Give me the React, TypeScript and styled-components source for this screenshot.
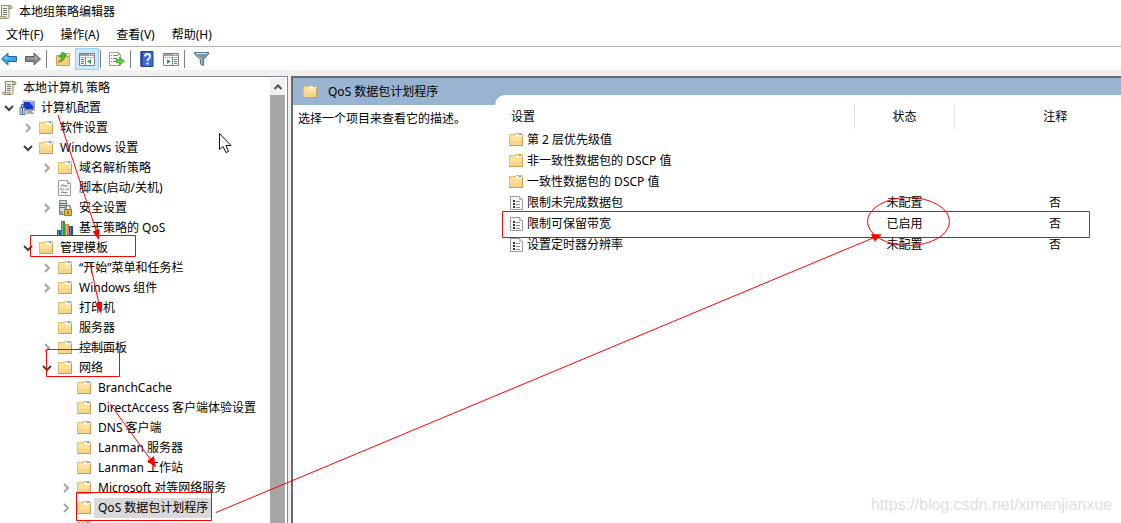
import React from "react";
import styled, { createGlobalStyle } from "styled-components";

const GlobalStyle = createGlobalStyle`
  * { box-sizing: border-box; }
  body {
    margin: 0;
    background: #fff;
    color: #000;
    font-family: "Noto Sans", "Noto Sans CJK SC", sans-serif;
    font-size: 12px;
    line-height: 20px;
  }
  button { font: inherit; color: inherit; }
`;

const Window = styled.div`
  position: relative;
  display: flex;
  flex-direction: column;
  height: 100vh;
  overflow: hidden;
  background: #fff;
`;

const TitleBar = styled.header`
  display: flex;
  align-items: center;
  gap: 6px;
  height: 24px;
  flex: none;
  margin-left: -3px;
`;

const Title = styled.h1`
  margin: 0;
  font-size: 12px;
  font-weight: 400;
`;

const MenuBar = styled.nav`
  display: flex;
  flex: none;
  gap: 17px;
  height: 23px;
  padding-left: 6px;
  border-bottom: 1px solid #b4b4b4;
`;

const MenuButton = styled.button`
  padding: 0;
  border: 0;
  background: none;
  line-height: 20px;
`;

const ToolBar = styled.div`
  display: flex;
  flex: none;
  align-items: center;
  height: 23px;
  margin-left: -3px;
`;

const ToolButton = styled.button<{ $pressed?: boolean }>`
  display: grid;
  place-items: center;
  width: 24px;
  height: 22px;
  padding: 0;
  border: 1px solid ${(p) => (p.$pressed ? "#99d1ff" : "transparent")};
  background: ${(p) => (p.$pressed ? "#cce8ff" : "none")};
`;

const Separator = styled.span`
  width: 6px;
  height: 18px;
  border-left: 1px solid #808080;
  margin-left: 1px;
  margin-right: -1px;
`;

const Panes = styled.div`
  display: flex;
  flex: 1;
  gap: 3px;
  min-height: 0;
  padding-top: 6px;
  background: #f0f0f0;
`;

const TreePane = styled.aside`
  display: flex;
  flex: none;
  width: 288px;
  border: 1px solid #828790;
  border-width: 1px 1px 0 0;
  padding-right: 2px;
  background: #fff;
  overflow: hidden;
`;

const Tree = styled.ul`
  flex: 1;
  margin: 0;
  padding: 1px 0 0;
  list-style: none;
  white-space: nowrap;
`;

const TreeRow = styled.li<{ $level: number }>`
  display: flex;
  align-items: center;
  height: 20px;
  padding-left: ${(p) => (p.$level ? (p.$level - 1) * 19 : 1)}px;
`;

const Twisty = styled.button`
  display: grid;
  place-items: center;
  width: 17px;
  height: 20px;
  margin-right: 2px;
  padding: 0;
  border: 0;
  background: none;
`;

const TwistySpace = styled.span`
  width: 19px;
`;

const TreeLabel = styled.span<{ $selected?: boolean }>`
  margin-left: 2px;
  padding: 0 4px;
  background: ${(p) => (p.$selected ? "#d9d9d9" : "transparent")};
`;

const ScrollBar = styled.div`
  width: 15px;
  margin-top: 1px;
  flex: none;
  background: #a6a6a6;
`;

const ScrollButton = styled.button`
  display: grid;
  place-items: center;
  width: 15px;
  height: 17px;
  padding: 0;
  border: 0;
  background: #f0f0f0;
`;

const DetailPane = styled.main`
  flex: 1;
  min-width: 0;
  border-top: 2px solid #696969;
  border-left: 2px solid #696969;
  background: #fff;
`;

const DetailHeader = styled.div`
  display: flex;
  align-items: center;
  height: 27px;
  padding-left: 9px;
  gap: 10px;
  background: #99b4d1;
`;

const DetailTitle = styled.h2`
  margin: 0;
  font-size: 12px;
  font-weight: 400;
`;

const DetailBody = styled.div`
  display: flex;
`;

const Description = styled.p`
  flex: none;
  width: 202px;
  margin: 0;
  padding: 4px 0 0 5px;
`;

const ListPanel = styled.section`
  flex: 1;
  min-width: 0;
  margin-top: -10px;
  padding-top: 10px;
  border-top-left-radius: 10px;
  background: #fff;
`;

const SettingsTable = styled.table`
  width: 100%;
  table-layout: fixed;
  border-collapse: collapse;
`;

const HeadCell = styled.th<{ $first?: boolean }>`
  height: 24px;
  padding: 0 0 0 ${(p) => (p.$first ? 16 : 1)}px;
  border-left: ${(p) => (p.$first ? "0" : "1px solid #e3e3e3")};
  font-weight: 400;
  text-align: ${(p) => (p.$first ? "left" : "center")};
`;

const Cell = styled.td`
  height: 21px;
  padding: 0 0 0 1px;
  text-align: center;
`;

const NameCell = styled.div`
  display: flex;
  align-items: center;
  gap: 3px;
  padding-left: 12px;
`;

const NoteText = styled.span`
  display: block;
  padding-left: 34px;
`;

const Annotations = styled.svg`
  position: absolute;
  top: 0;
  left: 0;
  pointer-events: none;
`;

const Watermark = styled.span`
  position: absolute;
  right: 9px;
  bottom: 8px;
  color: #e0e0e0;
  font-family: "Liberation Sans", sans-serif;
  font-size: 16px;
`;

const FolderIcon = () => (
  <svg width="16" height="16" viewBox="0 0 16 16">
    <path d="M7 2l1-1h6l1 1v3H6z" fill="#dfb765" />
    <path d="M8 2h6v2H8z" fill="#fdf6e0" />
    <path d="M11 2h2v1h-2z" fill="#3e8fd8" />
    <path d="M1 2h6l1 2h7v10H1z" fill="#fbe09a" />
    <path d="M1 2h6v1H1zM1 3h1v10H1z" fill="#e3bf74" />
    <path d="M8 4h6v1H8z" fill="#fff0c4" />
    <path d="M2 9h12v4H2z" fill="#f6d488" />
    <path d="M1 13h14v1H1zM14 4h1v10h-1z" fill="#c99f50" />
  </svg>
);

const ScrollIcon = () => (
  <svg width="16" height="16" viewBox="0 0 16 16">
    <path d="M4.5 1.500h9L12 4v8.500q0 2-2 2H3.500l1-2z" fill="#f9f3dc" stroke="#8d8467" />
    <path d="M13 1.500q-1.500.5-1.500 3H15q.5-3-2-3z" fill="#d3c79d" stroke="#8d8467" strokeWidth=".8" />
    <path d="M1.500 12.500h7.500q-.5 1.500 1 2H3q-1.500 0-1.500-2z" fill="#e4d9b2" stroke="#8d8467" strokeWidth=".8" />
    <path d="M6 4.500h4M6 6.500h4M6 8.500h4M6 10.500h4" stroke="#777" />
  </svg>
);

const ComputerIcon = () => (
  <svg width="16" height="16" viewBox="0 0 16 16">
    <path d="M4 1h11.500v9.500H4z" fill="#e3e3dc" stroke="#8c8c8c" strokeWidth=".8" />
    <path d="M5 2h9.500v7.500H5z" fill="#1736c4" />
    <path d="M10 2h4.500v5z" fill="#6f9cf5" />
    <path d="M8 11h5v1.500h2V14H7v-1.500h1z" fill="#a9a9a2" />
    <path d="M1 7.500h5v7H1z" fill="#c4d7e9" stroke="#577997" />
    <path d="M2.500 7V4.500h2V7M3.500 8v6" fill="none" stroke="#3e6486" />
  </svg>
);

const ScriptIcon = () => (
  <svg width="16" height="16" viewBox="0 0 16 16">
    <path d="M1.500.5h9l3 3v12h-12z" fill="#fff" stroke="#9a9a9a" />
    <path d="M10.500.5v3h3" fill="#eee" stroke="#9a9a9a" />
    <path d="M4 5.500q1.500-1 3 0t3.500 0M4 12.500q1.500-1 3 0t3.500 0" fill="none" stroke="#666" />
    <path d="M5 7.500L3.500 9 5 10.500M10 7.500L11.500 9 10 10.500M6 9.500h1M8 9.500h1" fill="none" stroke="#666" />
  </svg>
);

const SecurityIcon = () => (
  <svg width="16" height="16" viewBox="0 0 16 16">
    <path d="M2.500.5h7v14h-7z" fill="#d4dce0" stroke="#74828a" />
    <path d="M3 3.500h6M3 5.500h6M3 7.500h6" stroke="#607079" />
    <path d="M3 11h3v3H3z" fill="#8ba0aa" />
    <path d="M8.500 10V7.500q0-2 2.500-2t2.500 2V10" fill="none" stroke="#8e8e8e" strokeWidth="1.500" />
    <path d="M7.500 9.500h7v6h-7z" fill="#e8b84a" stroke="#9c7426" />
    <path d="M10.500 11h1v3h-1z" fill="#69450a" />
  </svg>
);

const ChartIcon = () => (
  <svg width="16" height="16" viewBox="0 0 16 16">
    <path d="M0 10h4v5H0z" fill="#1b5fa8" />
    <path d="M4 1h4v14H4z" fill="#2d9b43" />
    <path d="M8 4h4v11H8z" fill="#e4804a" />
    <path d="M12 6h4v9h-4z" fill="#174f91" />
    <path d="M1 11h1v4H1zM5 2h1v13H5zM9 5h1v10H9zM13 7h1v8h-1z" fill="#fff" opacity=".35" />
  </svg>
);

const PolicyIcon = () => (
  <svg width="16" height="16" viewBox="0 0 16 16">
    <path d="M2.500 1.500h9l3 3v10h-12z" fill="#fbfbfb" stroke="#9a9a9a" />
    <path d="M11.500 1.500v3h3" fill="#ddd" stroke="#b5b5b5" />
    <path d="M5 5h2v2H5zM5 8h2v2H5zM5 11h2v2H5z" fill="#333" />
    <path d="M8 6.500h4M8 9.500h4M8 12.500h4" stroke="#8c86a8" />
  </svg>
);

const Chevron = ({ open }: { open?: boolean }) => (
  <svg width="10" height="10" viewBox="0 0 10 10" fill="none" strokeWidth="2">
    <path d={open ? "M1 3l4 4 4-4" : "M3 1l4 4-4 4"} stroke={open ? "#404040" : "#a6a6a6"} />
  </svg>
);

const ArrowIcon = ({ forward }: { forward?: boolean }) => (
  <svg width="16" height="16" viewBox="0 0 16 16">
    <path
      d={forward ? "M15.500 8L9 2v3.500H.5v5H9V14z" : "M.5 8L7 2v3.500h8.500v5H7V14z"}
      fill={forward ? "#8a8a8a" : "#36a4e6"}
      stroke={forward ? "#5f5f5f" : "#1769ab"}
    />
    <path d={forward ? "M1.500 7h8.500V4.500L13.500 8z" : "M14.500 7H6V4.500L2.500 8z"} fill={forward ? "#adadad" : "#7fd0f8"} />
  </svg>
);

const UpFolderIcon = () => (
  <svg width="16" height="16" viewBox="0 0 16 16">
    <path d="M1.500 4.500h6l1 1h6v9h-13z" fill="#f2cf7c" stroke="#cfa24d" />
    <path d="M9.500 2.500h5v3h-5z" fill="#fff4d0" stroke="#cfa24d" />
    <path d="M3 11Q7 9.500 6.500 5.500L4 6l3.500-5L12 4.500l-2.500.5Q10.500 10 3 11z" fill="#4dbb2f" stroke="#2a8a1b" strokeWidth=".7" />
  </svg>
);

const PaneIcon = ({ flipped }: { flipped?: boolean }) => (
  <svg width="16" height="16" viewBox="0 0 16 16">
    <path d="M.5 2.500h15v12H.5z" fill="#fff" stroke="#7b8087" />
    <path d="M1 3h14v2H1z" fill="#9aa0a8" />
    <path d="M10 3.500h1M12 3.500h1M14 3.500h1" stroke="#fff" />
    <path d="M1 6.500h14" stroke="#b9bdc3" />
    {flipped ? (
      <>
        <path d="M9.500 6v8" stroke="#7b8087" />
        <path d="M4 8l4 2.500L4 13z" fill="#35a93a" />
        <path d="M11 8.500h3M11 10.500h3M11 12.500h3" stroke="#4779b5" />
      </>
    ) : (
      <>
        <path d="M6.500 6v8" stroke="#7b8087" />
        <path d="M12 8l-4 2.500L12 13z" fill="#35a93a" />
        <path d="M2 8.500h3M2 10.500h3M2 12.500h3" stroke="#4779b5" />
      </>
    )}
  </svg>
);

const ExportIcon = () => (
  <svg width="16" height="16" viewBox="0 0 16 16">
    <path d="M.5 1.500h9l2 2v11H.5z" fill="#fffdf0" stroke="#a09d8c" />
    <path d="M9.500 1.500v2h2" fill="#e2dfcc" stroke="#a09d8c" />
    <path d="M2 4.500h1M2 7.500h1M2 10.500h1M4 4.500h5M4 7.500h4M4 10.500h4" stroke="#827d9a" />
    <path d="M7 8.500h3.500V6L15.500 10l-5 4v-2.500H7z" fill="#5ccc45" stroke="#39a52b" strokeWidth=".8" />
  </svg>
);

const HelpIcon = () => (
  <svg width="16" height="16" viewBox="0 0 16 16">
    <path d="M2 .5h12v15H2z" fill="#3f6cd3" stroke="#1e3f94" />
    <path d="M1.500 1h2v14h-2z" fill="#203f96" />
    <path d="M6 5.500Q6 3 8.500 3T11 5.500Q11 7 9.500 8 8.500 8.500 8.500 10" fill="none" stroke="#fff" strokeWidth="1.800" />
    <path d="M7.500 11.500h2v2h-2z" fill="#fff" />
  </svg>
);

const FilterIcon = () => (
  <svg width="16" height="16" viewBox="0 0 16 16">
    <path d="M1.500 1.500h14V3L10.500 8.500v6l-3-1.500V8.500L1.500 3z" fill="#7d98aa" stroke="#5a7384" />
    <path d="M3 2.500h11" stroke="#d5e3eb" />
    <path d="M4.500 4.500l4 4V13" fill="none" stroke="#b9ccd8" />
  </svg>
);

type Node = { level: number; label?: string; icon?: React.ReactNode; state?: "open" | "closed"; selected?: boolean };

const nodes: Node[] = [
  { level: 0, label: "本地计算机 策略", icon: <ScrollIcon /> },
  { level: 1, label: "计算机配置", icon: <ComputerIcon />, state: "open" },
  { level: 2, label: "软件设置", state: "closed" },
  { level: 2, label: "Windows 设置", state: "open" },
  { level: 3, label: "域名解析策略", state: "closed" },
  { level: 3, label: "脚本(启动/关机)", icon: <ScriptIcon /> },
  { level: 3, label: "安全设置", icon: <SecurityIcon />, state: "closed" },
  { level: 3, label: "基于策略的 QoS", icon: <ChartIcon /> },
  { level: 2, label: "管理模板", state: "open" },
  { level: 3, label: "“开始”菜单和任务栏", state: "closed" },
  { level: 3, label: "Windows 组件", state: "closed" },
  { level: 3, label: "打印机" },
  { level: 3, label: "服务器" },
  { level: 3, label: "控制面板", state: "closed" },
  { level: 3, label: "网络", state: "open" },
  { level: 4, label: "BranchCache" },
  { level: 4, label: "DirectAccess 客户端体验设置" },
  { level: 4, label: "DNS 客户端" },
  { level: 4, label: "Lanman 服务器" },
  { level: 4, label: "Lanman 工作站" },
  { level: 4, label: "Microsoft 对等网络服务", state: "closed" },
  { level: 4, label: "QoS 数据包计划程序", state: "closed", selected: true },
  { level: 4 },
];

const settings = [
  { name: "第 2 层优先级值", folder: true },
  { name: "非一致性数据包的 DSCP 值", folder: true },
  { name: "一致性数据包的 DSCP 值", folder: true },
  { name: "限制未完成数据包", state: "未配置", note: "否" },
  { name: "限制可保留带宽", state: "已启用", note: "否" },
  { name: "设置定时器分辨率", state: "未配置", note: "否" },
];

export default function App() {
  return (
    <Window>
      <GlobalStyle />
      <TitleBar>
        <ScrollIcon />
        <Title>本地组策略编辑器</Title>
      </TitleBar>
      <MenuBar>
        {["文件(F)", "操作(A)", "查看(V)", "帮助(H)"].map((m) => (
          <MenuButton key={m}>{m}</MenuButton>
        ))}
      </MenuBar>
      <ToolBar>
        <ToolButton aria-label="后退"><ArrowIcon /></ToolButton>
        <ToolButton aria-label="前进"><ArrowIcon forward /></ToolButton>
        <Separator />
        <ToolButton aria-label="上一级"><UpFolderIcon /></ToolButton>
        <ToolButton aria-label="显示控制台树" $pressed><PaneIcon /></ToolButton>
        <Separator />
        <ToolButton aria-label="导出列表"><ExportIcon /></ToolButton>
        <Separator />
        <ToolButton aria-label="帮助"><HelpIcon /></ToolButton>
        <ToolButton aria-label="显示操作窗格"><PaneIcon flipped /></ToolButton>
        <Separator />
        <ToolButton aria-label="筛选"><FilterIcon /></ToolButton>
      </ToolBar>
      <Panes>
        <TreePane>
          <Tree>
            {nodes.map((n, i) => (
              <TreeRow key={i} $level={n.level}>
                {n.state ? (
                  <Twisty aria-label={n.state === "open" ? "折叠" : "展开"}>
                    <Chevron open={n.state === "open"} />
                  </Twisty>
                ) : (
                  n.level > 0 && <TwistySpace />
                )}
                {n.icon ?? <FolderIcon />}
                {n.label && <TreeLabel $selected={n.selected}>{n.label}</TreeLabel>}
              </TreeRow>
            ))}
          </Tree>
          <ScrollBar>
            <ScrollButton aria-label="向上滚动">
              <svg width="10" height="10" viewBox="0 0 10 10" fill="none">
                <path d="M1.500 7L5 3.500 8.500 7" stroke="#505050" strokeWidth="2" />
              </svg>
            </ScrollButton>
          </ScrollBar>
        </TreePane>
        <DetailPane>
          <DetailHeader>
            <FolderIcon />
            <DetailTitle>QoS 数据包计划程序</DetailTitle>
          </DetailHeader>
          <DetailBody>
            <Description>选择一个项目来查看它的描述。</Description>
            <ListPanel>
              <SettingsTable>
                <colgroup>
                  <col />
                  <col width="100" />
                  <col width="167" />
                </colgroup>
                <thead>
                  <tr>
                    <HeadCell $first>设置</HeadCell>
                    <HeadCell>状态</HeadCell>
                    <HeadCell><NoteText>注释</NoteText></HeadCell>
                  </tr>
                </thead>
                <tbody>
                  {settings.map((s) => (
                    <tr key={s.name}>
                      <Cell>
                        <NameCell>
                          {s.folder ? <FolderIcon /> : <PolicyIcon />}
                          {s.name}
                        </NameCell>
                      </Cell>
                      <Cell>{s.state}</Cell>
                      <Cell><NoteText>{s.note}</NoteText></Cell>
                    </tr>
                  ))}
                </tbody>
              </SettingsTable>
            </ListPanel>
          </DetailBody>
        </DetailPane>
      </Panes>
      <Watermark>https://blog.csdn.net/ximenjianxue</Watermark>
      <Annotations width="1121" height="523" viewBox="0 0 1121 523">
        <g fill="none" stroke="#f00">
          <path d="M30.500 235.500h105v21h-105zM46.500 349.500h73v27h-73zM76.500 492.500h135v28h-135zM502.500 211.500h587v26h-587z" />
          <ellipse cx="908.500" cy="221.500" rx="41" ry="24" />
          <path d="M58 115L97 233M90 263L99 304M110 404L151 460M216 512.500L873 238" />
        </g>
        <path d="M92.500 231.500l7-2.500-.5 11zM95 303.500l7-1.500-1 12zM147 461l7-5 2 11.500zM871 234l11 .5-7.500 7z" fill="#f00" />
        <path d="M219.500 133.500v16l3.500-3 3 6 2.500-1-2.500-6h5z" fill="#fff" stroke="#112" />
      </Annotations>
    </Window>
  );
}
